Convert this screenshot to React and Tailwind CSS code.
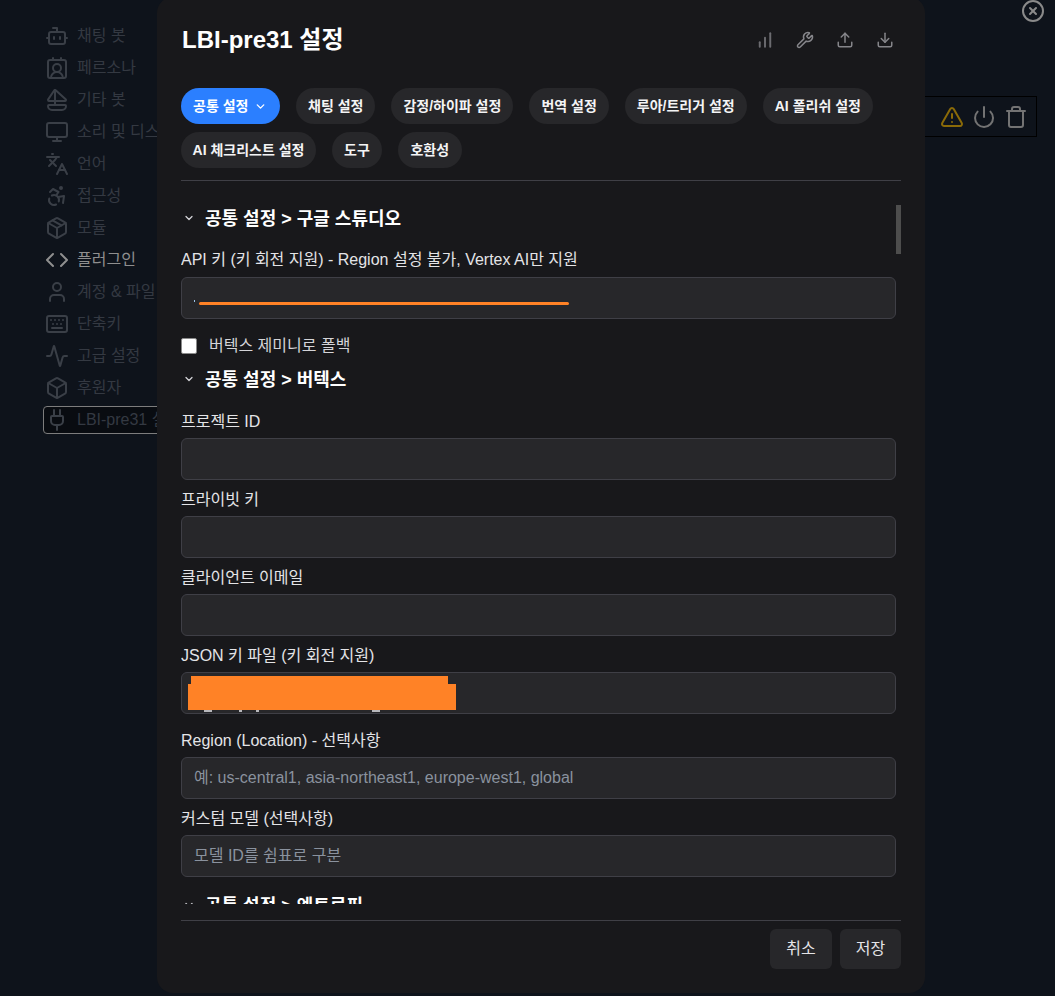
import {
  Accessibility,
  Activity,
  Bot,
  Box,
  ChartNoAxesColumnIncreasing,
  ChevronDown,
  CircleX,
  Code,
  ContactRound,
  Download,
  Keyboard,
  Languages,
  Monitor,
  Package,
  Plug,
  Power,
  Sailboat,
  Trash,
  TriangleAlert,
  Upload,
  User,
  Wrench,
} from 'lucide-react';

const FONT = "font-['Liberation_Sans','Noto_Sans_CJK_KR',sans-serif]";

const NAV = [
  { icon: Bot, label: '채팅 봇' },
  { icon: ContactRound, label: '페르소나' },
  { icon: Sailboat, label: '기타 봇' },
  { icon: Monitor, label: '소리 및 디스플레이' },
  { icon: Languages, label: '언어' },
  { icon: Accessibility, label: '접근성' },
  { icon: Package, label: '모듈' },
  { icon: Code, label: '플러그인', active: true },
  { icon: User, label: '계정 & 파일' },
  { icon: Keyboard, label: '단축키' },
  { icon: Activity, label: '고급 설정' },
  { icon: Box, label: '후원자' },
];

const TABS_ROW_1 = ['채팅 설정', '감정/하이파 설정', '번역 설정', '루아/트리거 설정', 'AI 폴리쉬 설정'];

const INPUT_CLASS =
  'block h-[42px] w-full rounded-md border border-[#3f3f46] bg-[#27272a] px-3 text-base text-[#e4e4e7] outline-none placeholder:text-[#8a929e]';

function NavRow({ item }) {
  const Icon = item.icon;
  return (
    <div className="flex h-8 items-center gap-2 whitespace-nowrap">
      <Icon size={24} className={`shrink-0 ${item.active ? 'text-[#8f8f8f]' : 'text-[#3a3f47]'}`} />
      <span className={item.active ? 'text-[#8f8f8f]' : 'text-[#343942]'}>{item.label}</span>
    </div>
  );
}

function Tab({ label, className = '' }) {
  return (
    <button className={`flex h-9 items-center justify-center rounded-full bg-[#27272a] px-3 text-sm font-semibold whitespace-nowrap text-[#f4f4f5] ${className}`}>
      {label}
    </button>
  );
}

function SectionHead({ label }) {
  return (
    <div className="flex h-7 items-center gap-[10px] pl-[2px] text-lg font-bold text-white">
      <ChevronDown size={12} strokeWidth={2.5} className="text-[#d4d4d8]" />
      <span className="pt-0.5">{label}</span>
    </div>
  );
}

function Field({ label, placeholder, className = 'mb-1.5', gap = 'mb-1.5 pt-px', children }) {
  return (
    <div className={className}>
      <label className={`block h-6 leading-[26px] text-[#e4e4e7] ${gap}`}>{label}</label>
      {children || <input className={INPUT_CLASS} placeholder={placeholder} />}
    </div>
  );
}

export default function App() {
  return (
    <div className={`relative flex h-[996px] overflow-hidden bg-[#0e131b] text-base ${FONT}`}>
      <aside className="w-[157px] shrink-0 pl-[45px] pt-5">
        {NAV.map((item) => (
          <NavRow key={item.label} item={item} />
        ))}
        <div className="-ml-[2px] mt-0.5 flex h-7 w-[200px] items-center gap-2 whitespace-nowrap rounded border border-[#7d7d7d] bg-[#090c11] pl-px">
          <Plug size={24} className="shrink-0 text-[#3a3f47]" />
          <span className="text-[#343942]">LBI-pre31 설정</span>
        </div>
      </aside>

      <main className="min-w-0 flex-1 pr-[18px] pt-[96px]">
        <div className="flex h-[41px] items-center justify-end gap-2 border border-black pr-2">
          <TriangleAlert size={24} className="text-[#8a6a08]" />
          <Power size={24} className="text-[#737373]" />
          <Trash size={24} className="text-[#737373]" />
        </div>
      </main>

      <button className="absolute right-[10px] top-[-1px] text-[#8a8a8a]">
        <CircleX size={24} />
      </button>

      <div className="absolute left-[157px] top-[-3px] flex h-[996px] w-[768px] flex-col rounded-2xl bg-[#18181b] px-6 pb-6 pt-6 text-[#e4e4e7]">
        <header className="flex h-9 items-center justify-between pl-px">
          <h1 className="pt-0.5 text-2xl font-bold text-white">LBI-pre31 설정</h1>
          <div className="mt-0.5 flex items-center gap-[22px] pr-[7px]">
            <ChartNoAxesColumnIncreasing size={18} strokeWidth={2.6} className="text-[#6b6b70]" />
            <Wrench size={18} className="text-[#85858a]" />
            <Upload size={18} className="text-[#85858a]" />
            <Download size={18} className="text-[#85858a]" />
          </div>
        </header>

        <nav className="mt-[31px] flex flex-col gap-2">
          <div className="flex gap-4">
            <button className="flex h-9 w-[99px] items-center gap-1.5 rounded-full bg-[#2b7fff] px-3 text-sm font-semibold whitespace-nowrap text-white">
              공통 설정
              <ChevronDown size={13} strokeWidth={2.5} />
            </button>
            {TABS_ROW_1.map((label) => (
              <Tab key={label} label={label} />
            ))}
          </div>
          <div className="flex gap-4">
            <Tab label="AI 체크리스트 설정" className="w-[135px]" />
            <Tab label="도구" />
            <Tab label="호환성" className="w-[64px]" />
          </div>
        </nav>

        <div className="mt-3 h-px bg-[#3f3f46]" />

        <div className="relative mt-[23px] h-[700px] overflow-hidden">
          <div className="pr-[5px]">
            <SectionHead label="공통 설정 > 구글 스튜디오" />
            <Field label="API 키 (키 회전 지원) - Region 설정 불가, Vertex AI만 지원" className="relative mt-[15px]" gap="mb-1.5">
              <input className={INPUT_CLASS} />
              <span className="absolute left-[18px] top-[55px] h-[3px] w-[370px] rounded-full bg-[#ff8226]" />
              <span className="absolute left-[13px] top-[53px] h-[2px] w-px bg-[#9cc4e8]" />
            </Field>
            <label className="mt-[15px] flex h-6 items-center gap-3">
              <span className="h-4 w-4 rounded-[2px] border border-[#8a8a8a] bg-white" />
              <span className="text-[#d4d4d8]">버텍스 제미니로 폴백</span>
            </label>
            <div className="mt-[7px]">
              <SectionHead label="공통 설정 > 버텍스" />
            </div>
            <Field label="프로젝트 ID" className="mb-1.5 mt-4" gap="mb-[5px]" />
            <Field label="프라이빗 키" />
            <Field label="클라이언트 이메일" />
            <Field label="JSON 키 파일 (키 회전 지원)" className="relative mb-[14px]">
              <input className={INPUT_CLASS} />
              <span className="absolute left-[10px] top-[34px] h-2 w-[257px] bg-[#ff8226]" />
              <span className="absolute left-[7px] top-[42px] h-[26px] w-[268px] bg-[#ff8226]" />
              <span className="absolute left-[23px] top-[68px] h-[2px] w-2 bg-[#b8b8bc]" />
              <span className="absolute left-[58px] top-[68px] h-[2px] w-[3px] bg-[#b8b8bc]" />
              <span className="absolute left-[75px] top-[68px] h-[2px] w-[3px] bg-[#b8b8bc]" />
              <span className="absolute left-[191px] top-[68px] h-[2px] w-2 bg-[#b8b8bc]" />
            </Field>
            <Field
              label="Region (Location) - 선택사항"
              gap="mb-[5px]"
              className="mb-[7px]"
              placeholder="예: us-central1, asia-northeast1, europe-west1, global"
            />
            <Field label="커스텀 모델 (선택사항)" gap="mb-[5px]" className="mb-3.5" placeholder="모델 ID를 쉼표로 구분" />
            <SectionHead label="공통 설정 > 엔트로픽" />
          </div>
          <div className="absolute right-0 top-[1px] h-[49px] w-[5px] bg-[#4d4d4d]" />
        </div>

        <div className="mt-[16px] h-px bg-[#3f3f46]" />

        <footer className="mt-2 flex justify-end gap-2">
          <button className="h-10 w-[62px] rounded-md bg-[#27272a] text-[#e4e4e7]">취소</button>
          <button className="h-10 w-[61px] rounded-md bg-[#27272a] text-[#e4e4e7]">저장</button>
        </footer>
      </div>
    </div>
  );
}
